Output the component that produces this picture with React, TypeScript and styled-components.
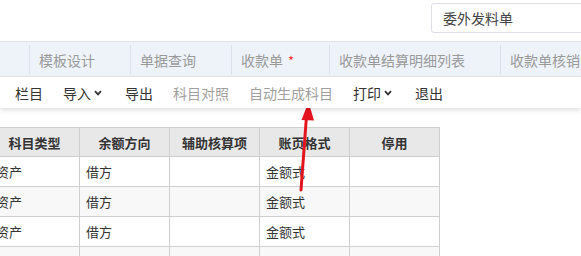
import React from "react";
import styled, { createGlobalStyle } from "styled-components";

const Global = createGlobalStyle`
  html, body { margin: 0; padding: 0; background: #fff; overflow: hidden; }
  body { font-family: "Noto Sans CJK SC", "Noto Sans", sans-serif; color: #333; }
  * { box-sizing: border-box; }
`;

const Page = styled.div`
  position: relative;
  width: 581px;
  height: 256px;
  overflow: hidden;
`;

const TopBar = styled.div`
  height: 41px;
  display: flex;
  padding: 3px 0 0 431px;
`;

const SearchBox = styled.div`
  flex: none;
  width: 180px;
  height: 30px;
  border: 1px solid #dcdfe6;
  border-radius: 3px;
  display: flex;
  align-items: center;
  padding-left: 11px;
  font-size: 14px;
  color: #444;
`;

const TabBar = styled.div`
  height: 36px;
  background: #eef3f9;
  border-top: 1px solid #dfe4ea;
  border-bottom: 1px solid #e3e7ec;
  display: flex;
  align-items: center;
  white-space: nowrap;
`;

const TabLead = styled.div`
  width: 29px;
  flex: none;
`;

const Tab = styled.div`
  flex: none;
  display: flex;
  align-items: center;
  height: 29px;
  padding: 2px 35px 0 9px;
  border-left: 1px solid #dbe1e8;
  font-size: 14px;
  color: #999;
`;

const Star = styled.span`
  color: #e33;
  margin-left: 5px;
  font-size: 13px;
`;

const Toolbar = styled.div`
  position: relative;
  z-index: 1;
  height: 31px;
  display: flex;
  align-items: center;
  padding-left: 5px;
  background: #fff;
  box-shadow: 0 2px 5px rgba(0, 0, 0, 0.13);
`;

const ToolItem = styled.div<{ $disabled?: boolean }>`
  display: flex;
  align-items: center;
  padding: 0 10px;
  font-size: 14px;
  color: ${(p) => (p.$disabled ? "#a0a0a0" : "#333")};
`;

const Chevron = styled.svg`
  margin: 0 3px 0 3px;
  width: 8px;
  height: 6px;
`;

const TableWrap = styled.div`
  margin-top: 19px;
  overflow: hidden;
`;

const Table = styled.div`
  margin-left: -11px;
  width: 451px;
  display: grid;
  grid-template-columns: repeat(5, 90px);
  border-left: 1px solid #cfcfcf;
  border-top: 1px solid #cfcfcf;
`;

const HeadCell = styled.div`
  height: 29px;
  background: #e8e8e8;
  border-right: 1px solid #cfcfcf;
  border-bottom: 1px solid #cfcfcf;
  display: flex;
  align-items: center;
  justify-content: center;
  font-size: 13px;
  font-weight: bold;
  color: #333;
`;

const Cell = styled.div<{ $alt?: boolean }>`
  height: 30px;
  background: ${(p) => (p.$alt ? "#f8f8f8" : "#fff")};
  border-right: 1px solid #cfcfcf;
  border-bottom: 1px solid #cfcfcf;
  display: flex;
  align-items: center;
  padding-left: 6px;
  font-size: 13px;
  color: #333;
`;

const ArrowSvg = styled.svg`
  position: absolute;
  left: 0;
  top: 0;
  pointer-events: none;
`;

const Down = () => (
  <Chevron viewBox="0 0 8 6">
    <path d="M1 1.2 L4 4.4 L7 1.2" fill="none" stroke="#333" strokeWidth="1.8" />
  </Chevron>
);

const heads = ["科目类型", "余额方向", "辅助核算项", "账页格式", "停用"];
const rows = [
  ["资产", "借方", "", "金额式", ""],
  ["资产", "借方", "", "金额式", ""],
  ["资产", "借方", "", "金额式", ""],
  ["资产", "借方", "", "金额式", ""],
];

export default function App() {
  return (
    <Page>
      <Global />
      <TopBar>
        <SearchBox>委外发料单</SearchBox>
      </TopBar>
      <TabBar>
        <TabLead />
        <Tab>模板设计</Tab>
        <Tab>单据查询</Tab>
        <Tab>
          收款单<Star>*</Star>
        </Tab>
        <Tab>收款单结算明细列表</Tab>
        <Tab>收款单核销</Tab>
      </TabBar>
      <Toolbar>
        <ToolItem>栏目</ToolItem>
        <ToolItem>
          导入
          <Down />
        </ToolItem>
        <ToolItem>导出</ToolItem>
        <ToolItem $disabled>科目对照</ToolItem>
        <ToolItem $disabled>自动生成科目</ToolItem>
        <ToolItem>
          打印
          <Down />
        </ToolItem>
        <ToolItem>退出</ToolItem>
      </Toolbar>
      <TableWrap>
        <Table>
          {heads.map((h) => (
            <HeadCell key={h}>{h}</HeadCell>
          ))}
          {rows.map((r, i) =>
            r.map((c, j) => (
              <Cell key={`${i}-${j}`} $alt={i % 2 === 1}>
                {c}
              </Cell>
            ))
          )}
        </Table>
      </TableWrap>
      <ArrowSvg width="581" height="256" viewBox="0 0 581 256">
        <line x1="301" y1="190" x2="306.5" y2="116" stroke="#e4141e" strokeWidth="3" strokeLinecap="round" />
        <polygon points="308.5,102 301.5,120 314,120.5" fill="#e4141e" />
      </ArrowSvg>
    </Page>
  );
}
